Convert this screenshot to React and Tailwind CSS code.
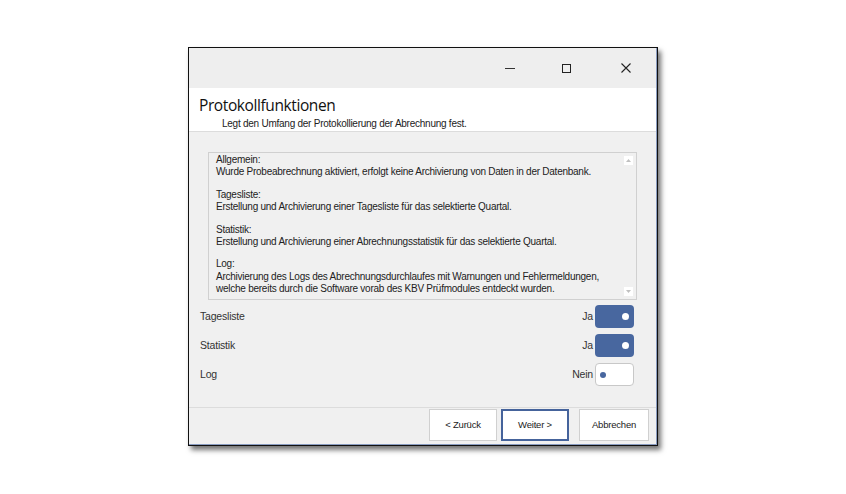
import React from "react";

function Toggle({ on, label }) {
  return (
    <div className="flex items-center gap-[2px]">
      <span className="text-[10.5px] tracking-[-0.2px] text-[#333]">{label}</span>
      {on ? (
        <div className="w-[39px] h-[23px] rounded-[4px] bg-[#48679f] flex items-center justify-end pr-[5px]">
          <div className="w-[7px] h-[7px] rounded-full bg-white" />
        </div>
      ) : (
        <div className="w-[39px] h-[23px] rounded-[4px] bg-white border border-[#c8c8c8] flex items-center justify-start pl-[4px]">
          <div className="w-[6px] h-[6px] rounded-full bg-[#48679f]" />
        </div>
      )}
    </div>
  );
}

function Row({ name, on, label }) {
  return (
    <div className="h-[29px] flex items-center justify-between pl-[11px] pr-[22px]">
      <span className="text-[10.5px] tracking-[-0.2px] text-[#333]">{name}</span>
      <Toggle on={on} label={label} />
    </div>
  );
}

export default function App() {
  return (
    <div
      className="w-[846px] h-[494px] bg-white overflow-hidden pt-[47px] pl-[188px]"
      style={{ fontFamily: '"Liberation Sans", "DejaVu Sans", sans-serif' }}
    >
      <div className="w-[470px] h-[399px] border border-[#111] bg-[#f0f0f0] flex flex-col shadow-[3px_4px_5px_rgba(0,0,0,0.55)]">
        <div className="flex-1 flex flex-col border-r border-b border-[#8a9cc0]">
          {/* title bar */}
          <div className="h-[40px] bg-[#eeeeee] flex justify-end items-center">
            <div className="w-[52px] flex justify-center">
              <div className="w-[10px] h-[1px] bg-[#333]" />
            </div>
            <div className="w-[60px] flex justify-center">
              <div className="w-[9px] h-[9px] border border-[#222]" />
            </div>
            <div className="w-[60px] flex justify-center">
              <svg width="10" height="10" viewBox="0 0 10 10">
                <path d="M0.5 0.5 L9.5 9.5 M9.5 0.5 L0.5 9.5" stroke="#222" strokeWidth="1.1" />
              </svg>
            </div>
          </div>
          {/* header */}
          <div className="h-[44px] bg-white border-b border-[#dcdcdc] pl-[10px] pt-[7px]">
            <div className="text-[15.5px] leading-[21px] tracking-[-0.4px] text-[#111]" style={{ fontFamily: '"Open Sans", "Noto Sans", sans-serif' }}>
              Protokollfunktionen
            </div>
            <div className="text-[10px] leading-[13px] tracking-[-0.25px] text-[#222] pl-[23px] mt-[1px]">
              Legt den Umfang der Protokollierung der Abrechnung fest.
            </div>
          </div>
          {/* body */}
          <div className="flex-1 flex flex-col">
            <div className="mt-[20px] mx-[19px] h-[148px] border border-[#d0d0d0] bg-[#f0f0f0] relative pl-[7px] pt-[1px]">
              <div className="text-[10px] leading-[12.4px] tracking-[-0.25px] text-[#222]">
                <div>Allgemein:</div>
                <div>Wurde Probeabrechnung aktiviert, erfolgt keine Archivierung von Daten in der Datenbank.</div>
                <div className="h-[10px]" />
                <div>Tagesliste:</div>
                <div>Erstellung und Archivierung einer Tagesliste für das selektierte Quartal.</div>
                <div className="h-[10px]" />
                <div>Statistik:</div>
                <div>Erstellung und Archivierung einer Abrechnungsstatistik für das selektierte Quartal.</div>
                <div className="h-[10px]" />
                <div>Log:</div>
                <div>Archivierung des Logs des Abrechnungsdurchlaufes mit Warnungen und Fehlermeldungen,</div>
                <div>welche bereits durch die Software vorab des KBV Prüfmodules entdeckt wurden.</div>
              </div>
              <div className="absolute right-[3px] top-[3px] w-[9px] h-[9px] bg-white flex items-center justify-center">
                <svg width="5" height="3" viewBox="0 0 5 3"><path d="M0 3 L2.5 0 L5 3 Z" fill="#c0c0c0" /></svg>
              </div>
              <div className="absolute right-[3px] bottom-[3px] w-[9px] h-[9px] bg-white flex items-center justify-center">
                <svg width="5" height="3" viewBox="0 0 5 3"><path d="M0 0 L2.5 3 L5 0 Z" fill="#c0c0c0" /></svg>
              </div>
            </div>
            <div className="mt-[2px] flex flex-col">
              <Row name="Tagesliste" on label="Ja" />
              <Row name="Statistik" on label="Ja" />
              <Row name="Log" on={false} label="Nein" />
            </div>
          </div>
          {/* footer */}
          <div className="h-[37px] border-t border-[#dcdcdc] flex justify-end items-start pt-[1px] pr-[7px] gap-[4px]">
            <button className="w-[68px] h-[32px] bg-white border border-[#d0d0d0] text-[9.5px] tracking-[-0.2px] text-[#222]">&lt; Zurück</button>
            <button className="w-[68px] h-[32px] bg-white border-2 border-[#45639b] text-[9.5px] tracking-[-0.2px] text-[#222]">Weiter &gt;</button>
            <button className="w-[70px] h-[32px] bg-white border border-[#d0d0d0] text-[9.5px] tracking-[-0.2px] text-[#222] ml-[6px]">Abbrechen</button>
          </div>
        </div>
      </div>
    </div>
  );
}
